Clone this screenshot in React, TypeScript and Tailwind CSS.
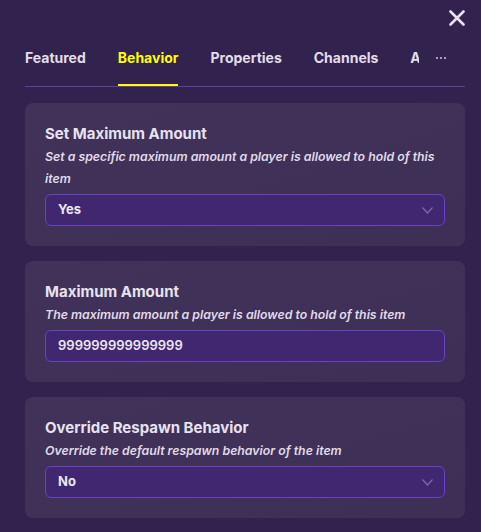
import React from 'react';

const tabs = ['Featured', 'Behavior', 'Properties', 'Channels', 'Advanced'];

const Chevron: React.FC = () => (
  <svg width="11" height="7" viewBox="0 0 11 7" fill="none" className="shrink-0">
    <path d="M0.5 0.5L5.5 6L10.5 0.5" stroke="#7d6aa6" strokeWidth="1.2" />
  </svg>
);

type CardProps = {
  title: string;
  description: string;
  children: React.ReactNode;
};

const Card: React.FC<CardProps> = ({ title, description, children }) => (
  <div className="rounded-[8px] bg-gradient-to-br from-[#403259] to-[#3d2f56] px-5 pt-[21px] pb-5">
    <div className="text-[15px] leading-[20px] font-bold text-[#e7e2ef]">{title}</div>
    <div className="mt-[2px] text-[12.3px] leading-[22px] font-semibold italic text-[#e0dae9]">{description}</div>
    <div className="mt-[4px]">{children}</div>
  </div>
);

const SelectBox: React.FC<{ value: string }> = ({ value }) => (
  <div className="flex h-[32px] items-center justify-between rounded-[6px] border border-[#6a42c4] bg-[#41276f] pl-3 pr-[11px]">
    <span className="text-[13px] font-bold text-[#ebe6f2]">{value}</span>
    <Chevron />
  </div>
);

const App: React.FC = () => {
  return (
    <div
      className="relative h-[532px] w-[481px] overflow-hidden bg-[#32234e]"
      style={{ fontFamily: 'Inter, "Noto Sans", sans-serif' }}
    >
      {/* Close button */}
      <button className="absolute right-[16px] top-[10px] text-[#e7e2ef]">
        <svg width="16" height="16" viewBox="0 0 16 16" fill="none">
          <path d="M1.5 1.5L14.5 14.5M14.5 1.5L1.5 14.5" stroke="currentColor" strokeWidth="2.6" strokeLinecap="round" />
        </svg>
      </button>

      <div className="pl-[25px] pr-[16px] pt-[48px]">
        {/* Tabs */}
        <div className="flex items-start border-b border-[#5a3fa3]">
          <div className="flex w-[394px] gap-[32px] overflow-hidden">
            {tabs.map((tab) => {
              const active = tab === 'Behavior';
              return (
                <div
                  key={tab}
                  className={
                    'relative shrink-0 pb-[18px] text-[14px] leading-[20px] font-bold ' +
                    (active ? 'text-[#ffff00]' : 'text-[#e2dde9]')
                  }
                >
                  {tab}
                  {active && <div className="absolute bottom-[-1px] left-0 right-0 h-[3px] bg-[#ffff00]" />}
                </div>
              );
            })}
          </div>
          <div className="ml-[17px] flex h-[20px] items-center gap-[2px]">
            <span className="h-[2px] w-[2px] rounded-full bg-[#cfc8dc]" />
            <span className="h-[2px] w-[2px] rounded-full bg-[#cfc8dc]" />
            <span className="h-[2px] w-[2px] rounded-full bg-[#cfc8dc]" />
          </div>
        </div>

        {/* Cards */}
        <div className="mt-[16px] flex flex-col gap-[15px]">
          <Card
            title="Set Maximum Amount"
            description="Set a specific maximum amount a player is allowed to hold of this item"
          >
            <SelectBox value="Yes" />
          </Card>

          <Card
            title="Maximum Amount"
            description="The maximum amount a player is allowed to hold of this item"
          >
            <div className="flex h-[32px] items-center rounded-[6px] border border-[#6a42c4] bg-[#41276f] px-3">
              <span className="text-[13px] font-semibold text-[#ebe6f2]">999999999999999</span>
            </div>
          </Card>

          <Card
            title="Override Respawn Behavior"
            description="Override the default respawn behavior of the item"
          >
            <SelectBox value="No" />
          </Card>
        </div>
      </div>
    </div>
  );
};

export default App;
